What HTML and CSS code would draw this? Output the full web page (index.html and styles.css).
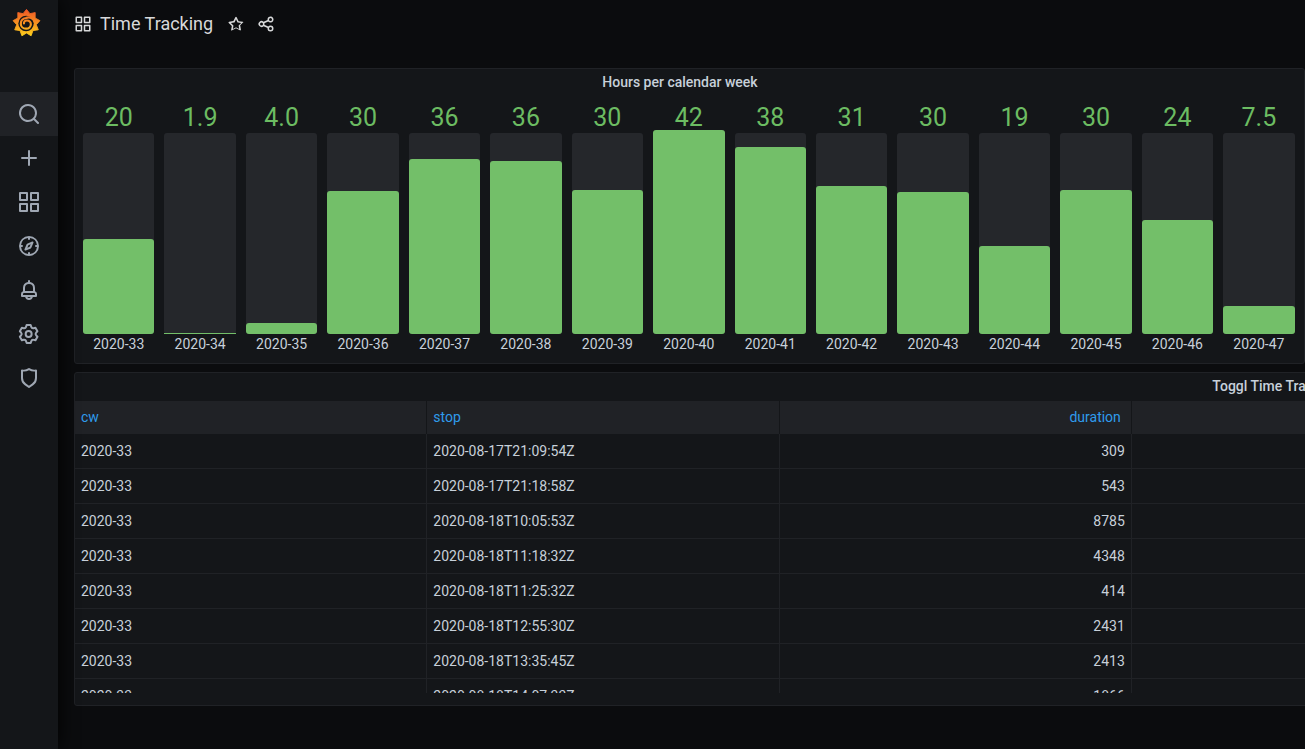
FILE: index.html
```html
<!DOCTYPE html>
<html lang="en">
<head>
<meta charset="utf-8">
<title>Time Tracking</title>
<link rel="stylesheet" href="styles.css">
</head>
<body>
<div class="app">
  <nav class="sidebar">
    <a class="logo" href="#">
      <svg width="29" height="30" viewBox="0 0 32 32">
        <defs><linearGradient id="lg" gradientUnits="userSpaceOnUse" x1="16" y1="31" x2="16" y2="1"><stop offset="0" stop-color="#fdd31c"/><stop offset=".5" stop-color="#f79120"/><stop offset="1" stop-color="#ef5527"/></linearGradient></defs>
        <path class="logo-gear" d="M16 1L19.800 5.700 25.600 4.500 25.500 10.500 30.800 13.400 26.800 17.900 29 23.500 23.100 24.400 21.100 30.100 16 27 10.900 30.100 8.900 24.400 3 23.500 5.200 17.900 1.200 13.400 6.500 10.500 6.400 4.500 12.200 5.700z"/>
        <circle class="logo-hole" cx="15.500" cy="16.500" r="8.500"/>
        <path class="logo-spiral" d="M25 14.500C23 9.500 18 9 15.500 10.500C12 11 9.700 13.500 9.700 16.800C9.700 20 12.300 22.300 15.500 22.300C18.500 22.300 20.800 20 20.800 17.300C20.800 15 19 13.200 16.500 13.200C14.500 13.200 13 14.700 13.200 16.500"/>
      </svg>
    </a>
    <a class="nav-item active" href="#"><svg class="ico" viewBox="0 0 24 24"><path d="M21.710 20.290L18 16.610A9 9 0 1 0 16.610 18l3.680 3.680a1 1 0 0 0 1.420 0A1 1 0 0 0 21.710 20.290ZM11 18a7 7 0 1 1 7-7A7 7 0 0 1 11 18Z"/></svg></a>
    <a class="nav-item" href="#"><svg class="ico" viewBox="0 0 24 24"><path d="M19 11H13V5a1 1 0 0 0-2 0v6H5a1 1 0 0 0 0 2h6v6a1 1 0 0 0 2 0V13h6a1 1 0 0 0 0-2Z"/></svg></a>
    <a class="nav-item" href="#"><svg class="ico" viewBox="0 0 24 24"><path d="M10 13H3a1 1 0 0 0-1 1v7a1 1 0 0 0 1 1h7a1 1 0 0 0 1-1V14A1 1 0 0 0 10 13ZM9 20H4V15H9ZM21 2H14a1 1 0 0 0-1 1v7a1 1 0 0 0 1 1h7a1 1 0 0 0 1-1V3A1 1 0 0 0 21 2ZM20 9H15V4h5Zm1 4H14a1 1 0 0 0-1 1v7a1 1 0 0 0 1 1h7a1 1 0 0 0 1-1V14A1 1 0 0 0 21 13Zm-1 7H15V15h5ZM10 2H3A1 1 0 0 0 2 3v7a1 1 0 0 0 1 1h7a1 1 0 0 0 1-1V3A1 1 0 0 0 10 2ZM9 9H4V4H9Z"/></svg></a>
    <a class="nav-item" href="#"><svg class="ico" viewBox="0 0 24 24"><path d="M12 2A10 10 0 1 0 22 12 10 10 0 0 0 12 2Zm1 17.930V19a1 1 0 0 0-2 0v.930A8 8 0 0 1 4.070 13H5a1 1 0 0 0 0-2H4.070A8 8 0 0 1 11 4.070V5a1 1 0 0 0 2 0V4.070A8 8 0 0 1 19.930 11H19a1 1 0 0 0 0 2h.930A8 8 0 0 1 13 19.930ZM15.140 7.550l-5 2.120a1 1 0 0 0-.520.520l-2.120 5a1 1 0 0 0 .210 1.100 1 1 0 0 0 .710.300.930.930 0 0 0 .390-.080l5-2.120a1 1 0 0 0 .520-.520l2.120-5a1 1 0 0 0-1.310-1.310Zm-2.490 5.100-2.280 1 1-2.280 2.280-1Z"/></svg></a>
    <a class="nav-item" href="#"><svg class="ico" viewBox="0 0 24 24"><path d="M18 13.180V10a6 6 0 0 0-5-5.910V3a1 1 0 0 0-2 0V4.090A6 6 0 0 0 6 10v3.180A3 3 0 0 0 4 16v2a1 1 0 0 0 1 1H8.140a4 4 0 0 0 7.720 0H19a1 1 0 0 0 1-1V16A3 3 0 0 0 18 13.180ZM8 10a4 4 0 0 1 8 0v3H8Zm4 10a2 2 0 0 1-1.720-1h3.440A2 2 0 0 1 12 20Zm6-3H6V16a1 1 0 0 1 1-1H17a1 1 0 0 1 1 1Z"/></svg></a>
    <a class="nav-item" href="#"><svg class="ico" viewBox="0 0 24 24"><path d="M19.900 12.660a1 1 0 0 1 0-1.320L21.180 9.900a1 1 0 0 0 .120-1.170l-2-3.460a1 1 0 0 0-1.070-.480l-1.880.380a1 1 0 0 1-1.150-.660l-.610-1.830A1 1 0 0 0 13.640 2h-4a1 1 0 0 0-1 .680L8.080 4.510a1 1 0 0 1-1.150.660L5 4.790A1 1 0 0 0 4 5.270L2 8.730A1 1 0 0 0 2.100 9.900l1.270 1.440a1 1 0 0 1 0 1.320L2.100 14.100A1 1 0 0 0 2 15.270l2 3.460a1 1 0 0 0 1.070.480l1.880-.380a1 1 0 0 1 1.150.660l.610 1.830a1 1 0 0 0 1 .680h4a1 1 0 0 0 .950-.680l.610-1.830a1 1 0 0 1 1.150-.660l1.880.380a1 1 0 0 0 1.070-.480l2-3.460a1 1 0 0 0-.120-1.170ZM18.410 14l.8.900-1.280 2.220-1.180-.240a3 3 0 0 0-3.450 2L12.920 20H10.360L10 18.860a3 3 0 0 0-3.450-2l-1.180.240L4.070 14.890l.8-.9a3 3 0 0 0 0-4l-.8-.9L5.350 6.890l1.180.240a3 3 0 0 0 3.450-2L10.360 4h2.560l.38 1.140a3 3 0 0 0 3.450 2l1.180-.240 1.280 2.220-.8.900A3 3 0 0 0 18.410 14ZM11.640 8a4 4 0 1 0 4 4A4 4 0 0 0 11.640 8Zm0 6a2 2 0 1 1 2-2A2 2 0 0 1 11.640 14Z"/></svg></a>
    <a class="nav-item" href="#"><svg class="ico" viewBox="0 0 24 24"><path d="M19.630 3.650a1 1 0 0 0-.840-.2 8 8 0 0 1-6.220-1.270 1 1 0 0 0-1.140 0A8 8 0 0 1 5.210 3.450a1 1 0 0 0-.840.2A1 1 0 0 0 4 4.430v7.450a9 9 0 0 0 3.770 7.330l3.650 2.600a1 1 0 0 0 1.160 0l3.650-2.600A9 9 0 0 0 20 11.880V4.430A1 1 0 0 0 19.630 3.650ZM18 11.880a7 7 0 0 1-2.930 5.700L12 19.770l-3.070-2.190A7 7 0 0 1 6 11.880V5.580a10 10 0 0 0 6-1.390 10 10 0 0 0 6 1.390Z"/></svg></a>
  </nav>
  <main class="main">
    <header class="topbar">
      <svg class="ico ico-top" viewBox="0 0 24 24"><path d="M10 13H3a1 1 0 0 0-1 1v7a1 1 0 0 0 1 1h7a1 1 0 0 0 1-1V14A1 1 0 0 0 10 13ZM9 20H4V15H9ZM21 2H14a1 1 0 0 0-1 1v7a1 1 0 0 0 1 1h7a1 1 0 0 0 1-1V3A1 1 0 0 0 21 2ZM20 9H15V4h5Zm1 4H14a1 1 0 0 0-1 1v7a1 1 0 0 0 1 1h7a1 1 0 0 0 1-1V14A1 1 0 0 0 21 13Zm-1 7H15V15h5ZM10 2H3A1 1 0 0 0 2 3v7a1 1 0 0 0 1 1h7a1 1 0 0 0 1-1V3A1 1 0 0 0 10 2ZM9 9H4V4H9Z"/></svg>
      <h1 class="dash-title">Time Tracking</h1>
      <svg class="ico ico-top star" viewBox="0 0 24 24"><path d="M22 9.670A1 1 0 0 0 21.140 9l-5.690-.830L12.900 3a1 1 0 0 0-1.800 0L8.550 8.160 2.860 9a1 1 0 0 0-.810.680 1 1 0 0 0 .250 1l4.130 4-1 5.680A1 1 0 0 0 6.900 20.440L12 17.770l5.100 2.670a.930.930 0 0 0 .460.120 1 1 0 0 0 .590-.190 1 1 0 0 0 .4-1l-1-5.680 4.130-4A1 1 0 0 0 22 9.670Zm-6.150 4a1 1 0 0 0-.290.880l.720 4.200-3.760-2a1.060 1.060 0 0 0-.940 0l-3.760 2 .720-4.200a1 1 0 0 0-.290-.880l-3-3 4.210-.610a1 1 0 0 0 .760-.550L12 5.700l1.880 3.820a1 1 0 0 0 .760.550l4.210.610Z"/></svg>
      <svg class="ico ico-top" viewBox="0 0 24 24"><path d="M18 14a4 4 0 0 0-3.080 1.480l-5.100-2.350a3.640 3.640 0 0 0 0-2.260l5.100-2.350A4 4 0 1 0 14 6a4.170 4.170 0 0 0 .070.710L8.790 9.140a4 4 0 1 0 0 5.720l5.280 2.430A4.170 4.170 0 0 0 14 18a4 4 0 1 0 4-4ZM18 4a2 2 0 1 1-2 2A2 2 0 0 1 18 4ZM6 14a2 2 0 1 1 2-2A2 2 0 0 1 6 14Zm12 6a2 2 0 1 1 2-2A2 2 0 0 1 18 20Z"/></svg>
    </header>

    <section class="panel gauge-panel">
      <h2 class="panel-title gauge-title">Hours per calendar week</h2>
      <div class="bars">
        <div class="bar-col"><span class="bar-val">20</span><div class="track"><div class="fill" style="height:95px"></div></div><span class="bar-label">2020-33</span></div>
        <div class="bar-col"><span class="bar-val">1.9</span><div class="track"><div class="fill thin" style="height:1px"></div></div><span class="bar-label">2020-34</span></div>
        <div class="bar-col"><span class="bar-val">4.0</span><div class="track"><div class="fill" style="height:11px"></div></div><span class="bar-label">2020-35</span></div>
        <div class="bar-col"><span class="bar-val">30</span><div class="track"><div class="fill" style="height:143px"></div></div><span class="bar-label">2020-36</span></div>
        <div class="bar-col"><span class="bar-val">36</span><div class="track"><div class="fill" style="height:175px"></div></div><span class="bar-label">2020-37</span></div>
        <div class="bar-col"><span class="bar-val">36</span><div class="track"><div class="fill" style="height:173px"></div></div><span class="bar-label">2020-38</span></div>
        <div class="bar-col"><span class="bar-val">30</span><div class="track"><div class="fill" style="height:144px"></div></div><span class="bar-label">2020-39</span></div>
        <div class="bar-col"><span class="bar-val">42</span><div class="track"><div class="fill" style="height:204px"></div></div><span class="bar-label">2020-40</span></div>
        <div class="bar-col"><span class="bar-val">38</span><div class="track"><div class="fill" style="height:187px"></div></div><span class="bar-label">2020-41</span></div>
        <div class="bar-col"><span class="bar-val">31</span><div class="track"><div class="fill" style="height:148px"></div></div><span class="bar-label">2020-42</span></div>
        <div class="bar-col"><span class="bar-val">30</span><div class="track"><div class="fill" style="height:142px"></div></div><span class="bar-label">2020-43</span></div>
        <div class="bar-col"><span class="bar-val">19</span><div class="track"><div class="fill" style="height:88px"></div></div><span class="bar-label">2020-44</span></div>
        <div class="bar-col"><span class="bar-val">30</span><div class="track"><div class="fill" style="height:144px"></div></div><span class="bar-label">2020-45</span></div>
        <div class="bar-col"><span class="bar-val">24</span><div class="track"><div class="fill" style="height:114px"></div></div><span class="bar-label">2020-46</span></div>
        <div class="bar-col"><span class="bar-val">7.5</span><div class="track"><div class="fill" style="height:28px"></div></div><span class="bar-label">2020-47</span></div>
      </div>
    </section>

    <section class="panel table-panel">
      <h2 class="panel-title">Toggl Time Tracking</h2>
      <div class="table-clip">
        <table class="data">
          <thead><tr><th>cw</th><th>stop</th><th class="num">duration</th><th></th><th></th><th></th><th></th></tr></thead>
          <tbody>
            <tr><td>2020-33</td><td>2020-08-17T21:09:54Z</td><td class="num">309</td><td></td><td></td><td></td><td></td></tr>
            <tr><td>2020-33</td><td>2020-08-17T21:18:58Z</td><td class="num">543</td><td></td><td></td><td></td><td></td></tr>
            <tr><td>2020-33</td><td>2020-08-18T10:05:53Z</td><td class="num">8785</td><td></td><td></td><td></td><td></td></tr>
            <tr><td>2020-33</td><td>2020-08-18T11:18:32Z</td><td class="num">4348</td><td></td><td></td><td></td><td></td></tr>
            <tr><td>2020-33</td><td>2020-08-18T11:25:32Z</td><td class="num">414</td><td></td><td></td><td></td><td></td></tr>
            <tr><td>2020-33</td><td>2020-08-18T12:55:30Z</td><td class="num">2431</td><td></td><td></td><td></td><td></td></tr>
            <tr><td>2020-33</td><td>2020-08-18T13:35:45Z</td><td class="num">2413</td><td></td><td></td><td></td><td></td></tr>
            <tr><td>2020-33</td><td>2020-08-18T14:07:33Z</td><td class="num">1866</td><td></td><td></td><td></td><td></td></tr>
          </tbody>
        </table>
      </div>
    </section>
  </main>
</div>
</body>
</html>
```
FILE: styles.css
```css
* { box-sizing: border-box; }
html, body { margin: 0; height: 100%; overflow: hidden; background: #0b0c0e; }
body { font-family: Roboto, "Liberation Sans", sans-serif; color: #c7d0d9; font-size: 14px; }
.app { display: flex; height: 749px; width: 1305px; overflow: hidden; }
.sidebar { flex: 0 0 58px; background: #141619; box-shadow: 0 0 20px #000; display: flex; flex-direction: column; position: relative; z-index: 2; }
.logo { height: 48px; padding: 0 5px 3px 0; margin-bottom: 44px; display: flex; align-items: center; justify-content: center; }
.logo svg { display: block; }
.logo-gear { fill: url(#lg); stroke: url(#lg); stroke-width: 1; stroke-linejoin: round; }
.logo-hole { fill: #141619; }
.logo-spiral { fill: none; stroke: url(#lg); stroke-width: 2.400; stroke-linecap: round; }
.nav-item { height: 44px; display: flex; align-items: center; justify-content: center; }
.nav-item.active { background: #202226; }
.ico { width: 24px; height: 24px; fill: #9fa7b3; display: block; flex: none; }
.main { flex: 1 1 auto; min-width: 0; padding-left: 16px; display: flex; flex-direction: column; overflow: hidden; }
.topbar { height: 48px; margin-bottom: 20px; display: flex; align-items: center; flex: none; }
.ico-top { width: 18px; height: 18px; fill: #d8d9da; }
.star { margin-right: 12px; }
.dash-title { margin: 0 14px 0 8px; font-size: 18px; font-weight: 400; color: #d8d9da; line-height: 48px; }
.panel { background: #141619; border: 1px solid #202226; border-radius: 3px; flex: none; }
.gauge-panel { width: 1231px; height: 296px; margin-bottom: 8px; }
.panel-title { margin: 0; height: 28px; line-height: 26px; text-align: center; font-size: 14px; font-weight: 500; color: #c7d0d9; }
.gauge-title { padding-right: 19px; }
.bars { display: flex; gap: 10px; padding: 0 9.500px 0 8px; }
.bar-col { flex: 1 1 0; min-width: 0; display: flex; flex-direction: column; align-items: center; }
.bar-val { height: 36px; line-height: 41px; font-size: 25px; color: #6cbc62; flex: none; }
.track { width: 100%; height: 201px; background: #25272b; border-radius: 3px; position: relative; flex: none; }
.fill { position: absolute; left: 0; right: 0; bottom: 0; background: #73bf69; border-radius: 3px; }
.fill.thin { border-radius: 0; }
.bar-label { line-height: 21px; font-size: 14px; color: #c7d0d9; white-space: nowrap; }
.table-panel { width: 2404px; height: 334px; }
.table-clip { height: 292px; overflow: hidden; }
.data { border-collapse: separate; border-spacing: 0; table-layout: fixed; width: 2466px; font-size: 14px; }
.data th, .data td { padding: 0 6px; text-align: left; }
.data th { height: 33px; padding-bottom: 2px; background: #202226; color: #2f9bec; font-weight: 400; border-right: 1px solid #141619; }
.data td { height: 35px; border-bottom: 1px solid #202226; border-right: 1px solid #202226; color: #c7d0d9; }
.data th.num { text-align: right; padding-right: 10px; }
.data td.num { text-align: right; }
```
